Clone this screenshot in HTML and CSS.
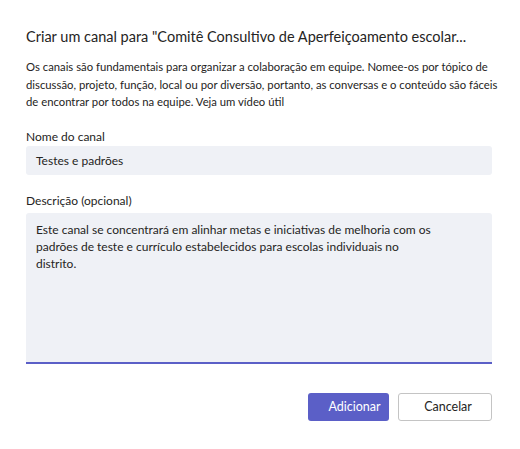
FILE: index.html
```html
<!DOCTYPE html>
<html lang="pt">
<head>
    <meta charset="UTF-8">
    <title>Criar um canal</title>
    <link rel="stylesheet" href="styles.css">
</head>
<body>
<div class="dialog">
    <h1 class="title">Criar um canal para "Comitê Consultivo de Aperfeiçoamento escolar...</h1>
    <p class="intro">Os canais são fundamentais para organizar a colaboração em equipe. Nomee-os por tópico de discussão, projeto, função, local ou por diversão, portanto, as conversas e o conteúdo são fáceis de encontrar por todos na equipe. Veja um vídeo útil</p>

    <label class="field-label">Nome do canal</label>
    <div class="input">Testes e padrões</div>

    <label class="field-label desc-label">Descrição (opcional)</label>
    <div class="textarea">Este canal se concentrará em alinhar metas e iniciativas de melhoria com os padrões de teste e currículo estabelecidos para escolas individuais no<br>distrito.</div>

    <div class="actions">
        <button class="btn primary">Adicionar</button>
        <button class="btn secondary">Cancelar</button>
    </div>
</div>
</body>
</html>
```

FILE: styles.css
```css
body {
    margin: 0;
    background-color: #ffffff;
    font-family: Lato, "Liberation Sans", sans-serif;
    color: #252423;
}

.dialog {
    width: 466px;
    padding: 27px 28px 0 26px;
}

.title {
    margin: 0;
    font-size: 14.5px;
    font-weight: normal;
    line-height: 20px;
    white-space: nowrap;
}

.intro {
    width: 480px;
    margin: 11px 0 0;
    font-size: 11.3px;
    line-height: 17.5px;
}

.field-label {
    display: block;
    font-size: 12px;
    line-height: 16px;
    margin-top: 18px;
}

.desc-label {
    margin-top: 18px;
}

.input {
    margin-top: 1px;
    height: 29px;
    line-height: 29px;
    background-color: #eff1f6;
    border-radius: 3px;
    padding: 0 10px;
    font-size: 12px;
}

.textarea {
    margin-top: 4px;
    height: 141px;
    background-color: #eff1f6;
    border-radius: 3px 3px 0 0;
    border-bottom: 2px solid #5b5fc7;
    padding: 8px 50px 0 10px;
    font-size: 12px;
    line-height: 17px;
}

.actions {
    display: flex;
    justify-content: flex-end;
    gap: 9px;
    margin-top: 29px;
}

.btn {
    height: 28px;
    border-radius: 3px;
    font-family: Lato, "Liberation Sans", sans-serif;
    font-size: 12.5px;
    cursor: pointer;
}

.btn.primary {
    width: 81px;
    background-color: #5b5fc7;
    border: none;
    color: #ffffff;
    padding-left: 18px;
}

.btn.secondary {
    width: 94px;
    background-color: #ffffff;
    border: 1px solid #c4c4c4;
    color: #252423;
    padding-left: 12px;
}
```
